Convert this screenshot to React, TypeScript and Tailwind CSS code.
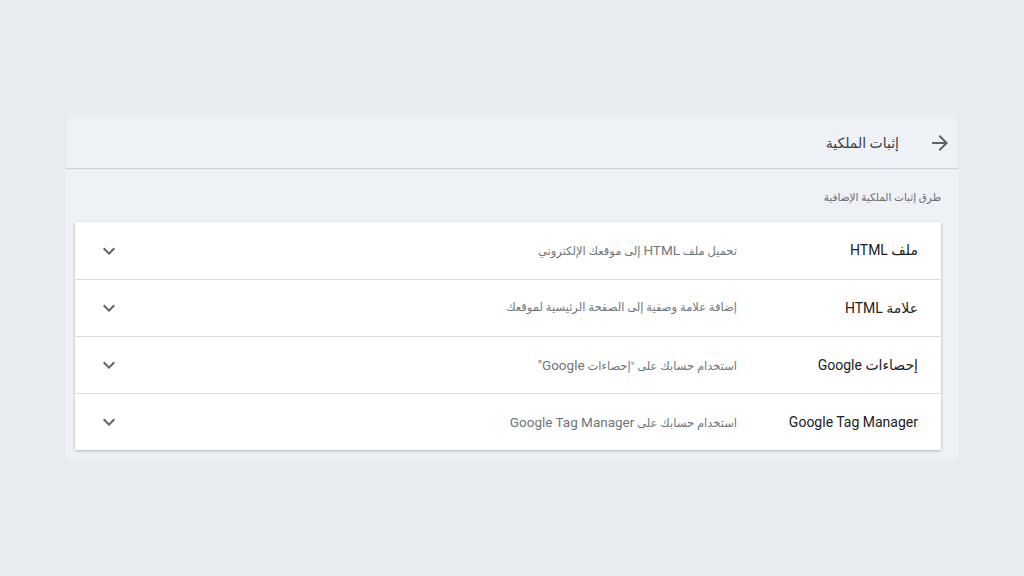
import React from 'react'

interface Method {
    id: string
    label: string
    description: string
}

const methods: Method[] = [
    { id: 'file', label: 'ملف HTML', description: 'تحميل ملف HTML إلى موقعك الإلكتروني' },
    { id: 'tag', label: 'علامة HTML', description: 'إضافة علامة وصفية إلى الصفحة الرئيسية لموقعك' },
    { id: 'ga', label: 'إحصاءات Google', description: 'استخدام حسابك على "إحصاءات Google"' },
    { id: 'gtm', label: 'Google Tag Manager', description: 'استخدام حسابك على Google Tag Manager' },
]

// latin words render a bit larger than the arabic ones in the original
const MixedText = ({ text }: { text: string }) => (
    <>
        {text.split(/([A-Za-z"][A-Za-z "]*[A-Za-z"])/).map((part, i) =>
            /[A-Za-z]/.test(part) ? (
                <span key={i} className="text-[13.5px]">
                    {part}
                </span>
            ) : (
                <span key={i}>{part}</span>
            ),
        )}
    </>
)

const ExpandIcon = () => (
    <svg width="24" height="24" viewBox="0 0 24 24" fill="#5f6368">
        <path d="M16.59 8.59L12 13.17 7.41 8.59 6 10l6 6 6-6z" />
    </svg>
)

const BackArrow = () => (
    <svg width="24" height="24" viewBox="0 0 24 24" fill="#5f6368">
        <path d="M12 4l-1.41 1.41L16.17 11H4v2h12.17l-5.58 5.59L12 20l8-8z" />
    </svg>
)

const App: React.FC = () => {
    return (
        <div
            className="min-h-[576px] w-full bg-[#e9edf2] pt-[118px]"
            style={{ fontFamily: 'Roboto, "DejaVu Sans", sans-serif' }}
        >
            <div dir="rtl" className="ml-[66px] w-[892px] bg-[#eef1f6]">
                <div className="flex h-[50px] items-center pr-[6px] shadow-[0_1px_1px_rgba(0,0,0,0.12)]">
                    <BackArrow />
                    <h1 className="mr-[29px] text-[14px] text-[#3c4043]">إثبات الملكية</h1>
                </div>
                <div className="pb-[9px] pl-[9px] pr-[17px] pt-[22px]">
                    <p className="text-[10.5px] leading-4 text-[#6b6f73]">طرق إثبات الملكية الإضافية</p>
                    <div className="mt-[16px] bg-white shadow-[0_1px_3px_rgba(0,0,0,0.25)]">
                        {methods.map((m, i) => (
                            <div
                                key={m.id}
                                className={`flex h-[57px] items-center pr-[23px] ${i > 0 ? 'border-t border-[#dadce0]' : ''}`}
                            >
                                <span className="w-[181px] shrink-0 text-[14px] text-[#202124]">{m.label}</span>
                                <span className="flex-1 text-[11.5px] text-[#70757a]">
                                    <MixedText text={m.description} />
                                </span>
                                <span className="ml-[22px] flex">
                                    <ExpandIcon />
                                </span>
                            </div>
                        ))}
                    </div>
                </div>
            </div>
        </div>
    )
}

export default App
